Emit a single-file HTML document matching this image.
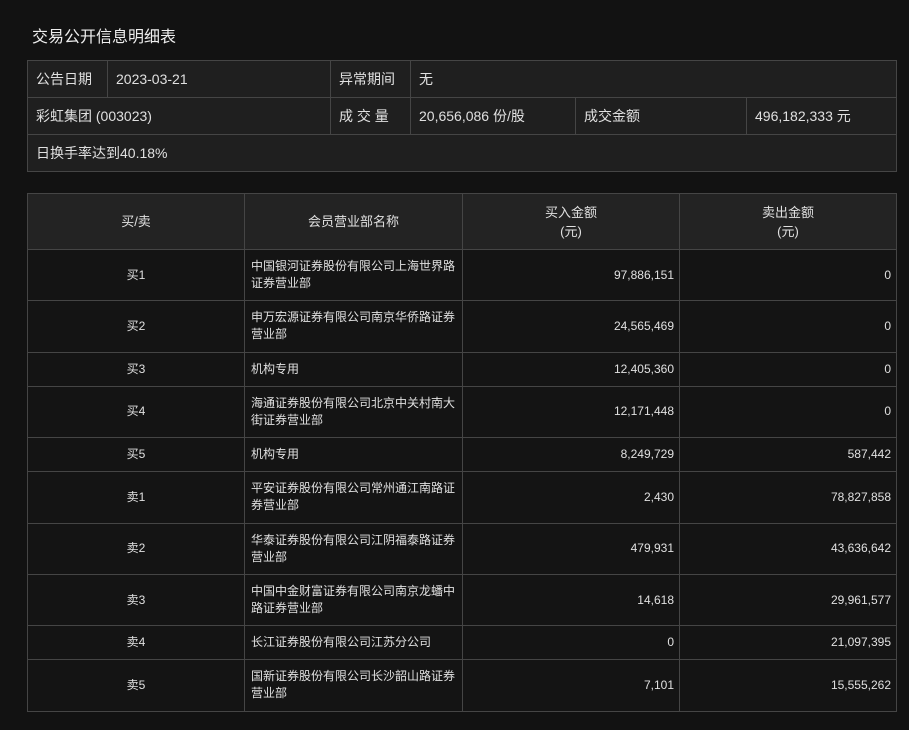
<!DOCTYPE html>
<html><head><meta charset="utf-8"><style>
body{margin:0;background:#121212;color:#e0e0e0;font-family:"Liberation Sans","Noto Sans CJK SC",sans-serif;width:909px;height:730px;overflow:hidden;position:relative}
.t{position:absolute;left:32px;top:23px;font-size:16px;color:#eee}
table{position:absolute;border-collapse:collapse;table-layout:fixed}
td,th{border:1px solid #454545;padding:0;box-sizing:border-box}
#a{left:27px;top:60px;width:869px;font-size:14px;background:#1f1f1f}
#a td{height:37px;padding-left:8px}
#b{left:27px;top:193px;width:869px;font-size:12px}
#b th{background:#232323;height:56px;font-weight:normal;font-size:13px;line-height:19px}
#b td{background:#141414;line-height:17px}
#b td:nth-child(1){text-align:center}
#b td:nth-child(2){padding-left:6px}
#b td:nth-child(3),#b td:nth-child(4){text-align:right;padding-right:5px}
.h2{height:51.3px}.h1{height:34.2px}
</style></head><body>
<div class="t">交易公开信息明细表</div>
<table id="a">
<colgroup><col style="width:80px"><col style="width:223px"><col style="width:80px"><col style="width:165px"><col style="width:171px"><col style="width:150px"></colgroup>
<tr><td>公告日期</td><td>2023-03-21</td><td>异常期间</td><td colspan="3">无</td></tr>
<tr><td colspan="2">彩虹集团 (003023)</td><td>成 交 量</td><td>20,656,086 份/股</td><td>成交金额</td><td>496,182,333 元</td></tr>
<tr><td colspan="6">日换手率达到40.18%</td></tr>
</table>
<table id="b">
<colgroup><col style="width:217px"><col style="width:218px"><col style="width:217px"><col style="width:217px"></colgroup>
<tr><th>买/卖</th><th>会员营业部名称</th><th>买入金额<br>(元)</th><th>卖出金额<br>(元)</th></tr>
<tr class="h2"><td>买1</td><td>中国银河证券股份有限公司上海世界路<br>证券营业部</td><td>97,886,151</td><td>0</td></tr>
<tr class="h2"><td>买2</td><td>申万宏源证券有限公司南京华侨路证券<br>营业部</td><td>24,565,469</td><td>0</td></tr>
<tr class="h1"><td>买3</td><td>机构专用</td><td>12,405,360</td><td>0</td></tr>
<tr class="h2"><td>买4</td><td>海通证券股份有限公司北京中关村南大<br>街证券营业部</td><td>12,171,448</td><td>0</td></tr>
<tr class="h1"><td>买5</td><td>机构专用</td><td>8,249,729</td><td>587,442</td></tr>
<tr class="h2"><td>卖1</td><td>平安证券股份有限公司常州通江南路证<br>券营业部</td><td>2,430</td><td>78,827,858</td></tr>
<tr class="h2"><td>卖2</td><td>华泰证券股份有限公司江阴福泰路证券<br>营业部</td><td>479,931</td><td>43,636,642</td></tr>
<tr class="h2"><td>卖3</td><td>中国中金财富证券有限公司南京龙蟠中<br>路证券营业部</td><td>14,618</td><td>29,961,577</td></tr>
<tr class="h1"><td>卖4</td><td>长江证券股份有限公司江苏分公司</td><td>0</td><td>21,097,395</td></tr>
<tr class="h2"><td>卖5</td><td>国新证券股份有限公司长沙韶山路证券<br>营业部</td><td>7,101</td><td>15,555,262</td></tr>
</table>
</body></html>
